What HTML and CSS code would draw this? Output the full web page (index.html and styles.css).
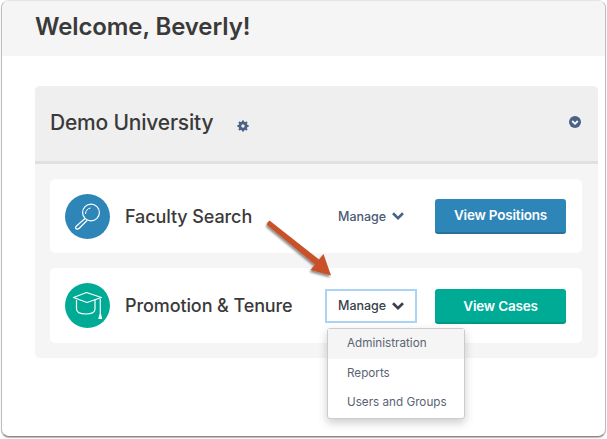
FILE: index.html
```html
<!DOCTYPE html>
<html lang="en">
<head>
    <meta charset="UTF-8">
    <meta name="viewport" content="width=device-width, initial-scale=1.0">
    <title>Welcome</title>
    <link rel="stylesheet" href="styles.css">
</head>
<body>

    <div class="window">
        <header class="page-head">
            <h1>Welcome, Beverly!</h1>
        </header>

        <section class="panel">
            <div class="panel-head">
                <h2>Demo University</h2>
                <svg class="gear" viewBox="0 0 12 12" width="12" height="12">
                    <circle cx="6" cy="6" r="3.3" fill="none" stroke="#4a6288" stroke-width="2.4"/>
                    <path d="M6 0.4V11.6M0.4 6H11.6M2 2L10 10M10 2L2 10" stroke="#4a6288" stroke-width="2"/>
                    <circle cx="6" cy="6" r="1.7" fill="#efefef"/>
                </svg>
                <svg class="collapse" viewBox="0 0 12 12" width="12" height="12">
                    <circle cx="6" cy="6" r="6" fill="#4a6288"/>
                    <path d="M3.2 5L6 7.8L8.8 5" fill="none" stroke="#fff" stroke-width="1.8"/>
                </svg>
            </div>

            <div class="panel-body">
                <div class="card">
                    <div class="icon icon-blue">
                        <svg viewBox="0 0 45 45" width="45" height="45" fill="none" stroke="#fff">
                            <circle cx="26" cy="18.5" r="8.4" stroke-width="1.2"/>
                            <path d="M20.500 20C20.500 17 22.500 14.500 25.500 14" stroke-width="1"/>
                            <path d="M20 24.500L11.500 32C10 33.500 10.500 34.500 11.500 35C12.500 35.500 13.500 35 14.500 34L22 26.500" stroke-width="1.200"/>
                        </svg>
                    </div>
                    <span class="card-title">Faculty Search</span>
                    <button class="manage" type="button">
                        Manage
                        <svg class="chevron" viewBox="0 0 12 8" width="12" height="8"><path d="M1 1.300L6 6.200L11 1.300" fill="none" stroke="#4a6288" stroke-width="2.600"/></svg>
                    </button>
                    <button class="view view-blue" type="button">View Positions</button>
                </div>

                <div class="card">
                    <div class="icon icon-green">
                        <svg viewBox="0 0 45 45" width="45" height="45" fill="none" stroke="#fff" stroke-width="1.200" stroke-linejoin="round">
                            <path d="M8.500 14.500L21.500 9.500L36.500 14.500L22 19.500Z"/>
                            <path d="M11.500 17V26C11.500 29.500 15 31 21 31C26.500 31 30 29.500 30 26V17"/>
                            <path d="M35.300 16V30"/>
                            <path d="M35.300 30.500L36.500 35.500H34Z" fill="#fff"/>
                        </svg>
                    </div>
                    <span class="card-title">Promotion &amp; Tenure</span>
                    <div class="manage-wrap">
                        <button class="manage manage-open" type="button">
                            Manage
                            <svg class="chevron" viewBox="0 0 12 8" width="12" height="8"><path d="M1 1.300L6 6.200L11 1.300" fill="none" stroke="#3a3f4a" stroke-width="2.600"/></svg>
                        </button>
                        <ul class="menu">
                            <li class="active">Administration</li>
                            <li>Reports</li>
                            <li>Users and Groups</li>
                        </ul>
                    </div>
                    <button class="view view-green" type="button">View Cases</button>
                </div>
            </div>
        </section>
    </div>

    <!-- annotation arrow over the page -->
    <svg class="arrow" viewBox="0 0 607 439" width="607" height="439">
        <defs>
            <filter id="arrow-shadow" x="-20%" y="-20%" width="140%" height="140%">
                <feDropShadow dx="-1" dy="2" stdDeviation="1.200" flood-color="#000" flood-opacity="0.450"/>
            </filter>
        </defs>
        <path d="M267.500 222.500L269.500 220.500L319 259.500L323.500 254L331 275.500L310.500 270L315 264.500L267 225Z" fill="#c9512a" filter="url(#arrow-shadow)"/>
    </svg>

</body>
</html>
```

FILE: styles.css
```css
* {
    box-sizing: border-box;
}

body {
    font-family: "Inter", sans-serif;
    margin: 0;
    padding: 0;
    width: 607px;
    height: 439px;
    overflow: hidden;
    background-color: #fff;
    color: #3a3a3a;
}

.window {
    width: 605px;
    height: 437px;
    margin-left: 1px;
    background-color: #fff;
    border: 1px solid #bdbdbd;
    border-top-color: #e4e4e4;
    border-bottom-color: #8a8a8a;
    border-radius: 8px;
    box-shadow: 0 1px 1px #bbb;
    overflow: hidden;
}

.page-head {
    height: 55px;
    background-color: #f5f5f5;
    padding: 11px 0 0 33px;
}

h1 {
    margin: 0;
    font-size: 24px;
    line-height: 30px;
    font-weight: 600;
    letter-spacing: -0.1px;
    color: #3a3a3a;
}

.panel {
    width: 563px;
    margin: 30px 0 0 33px;
    background-color: #f5f5f5;
    border-radius: 5px;
}

.panel-head {
    display: flex;
    align-items: center;
    height: 78px;
    padding: 0 17px 0 15px;
    background-color: #efefef;
    border-bottom: 3px solid #e0e0e0;
    border-radius: 5px 5px 0 0;
}

h2 {
    margin: 0 0 2px;
    font-size: 21px;
    line-height: 28px;
    font-weight: 500;
    letter-spacing: -0.2px;
    color: #3a3a3a;
}

.gear {
    margin: 5px 0 0 24px;
}

.collapse {
    margin: -3px 0 0 auto;
}

.panel-body {
    display: flex;
    flex-direction: column;
    gap: 15px;
    padding: 15px 16px 15px 15px;
}

.card {
    display: flex;
    align-items: center;
    height: 74px;
    padding: 0 16px 0 15px;
    background-color: #fff;
    border-radius: 5px;
}

.card + .card {
    height: 75px;
}

.icon {
    width: 45px;
    height: 45px;
    border-radius: 50%;
}

.icon-blue {
    background-color: #2e86b8;
}

.icon-green {
    background-color: #00ab96;
}

.card-title {
    margin-left: 15px;
    font-size: 18px;
    font-weight: 500;
    letter-spacing: -0.1px;
    color: #3a3a3a;
}

.manage-wrap {
    position: relative;
    margin-left: auto;
}

.manage {
    display: flex;
    align-items: center;
    gap: 7px;
    width: 92px;
    height: 34px;
    padding: 0 11px;
    background: none;
    border: 2px solid transparent;
    font-family: "Inter", sans-serif;
    font-size: 12.5px;
    font-weight: 500;
    white-space: nowrap;
    color: #4a5a75;
    margin-left: auto;
}

.chevron {
    flex: none;
    margin-left: -1px;
}

.manage-open {
    border-color: #a9d4f5;
    color: #3a3f4a;
    margin-left: 0;
}

.view {
    width: 131px;
    height: 35px;
    margin-left: 18px;
    border: none;
    border-radius: 3px;
    font-family: "Inter", sans-serif;
    font-size: 13.5px;
    font-weight: 600;
    letter-spacing: -0.2px;
    color: #fff;
}

.view-blue {
    background-color: #2e86b8;
    border-bottom: 2px solid #26719e;
}

.view-green {
    margin-top: 2px;
    background-color: #00ab96;
    border-bottom: 2px solid #059783;
}

.menu {
    position: absolute;
    top: 39px;
    left: 2px;
    width: 138px;
    height: 91px;
    margin: 0;
    padding: 0;
    list-style: none;
    background-color: #fff;
    border: 1px solid #ccc;
    border-radius: 3px;
    box-shadow: 0 4px 10px rgba(0, 0, 0, 0.2);
    font-size: 11.7px;
    color: #5a6373;
}

.menu li {
    height: 29.5px;
    padding: 5px 0 0 19px;
    line-height: 18px;
}

.menu li.active {
    height: 30px;
    background-color: #f5f5f5;
}

.arrow {
    position: absolute;
    top: 0;
    left: 0;
}
```
